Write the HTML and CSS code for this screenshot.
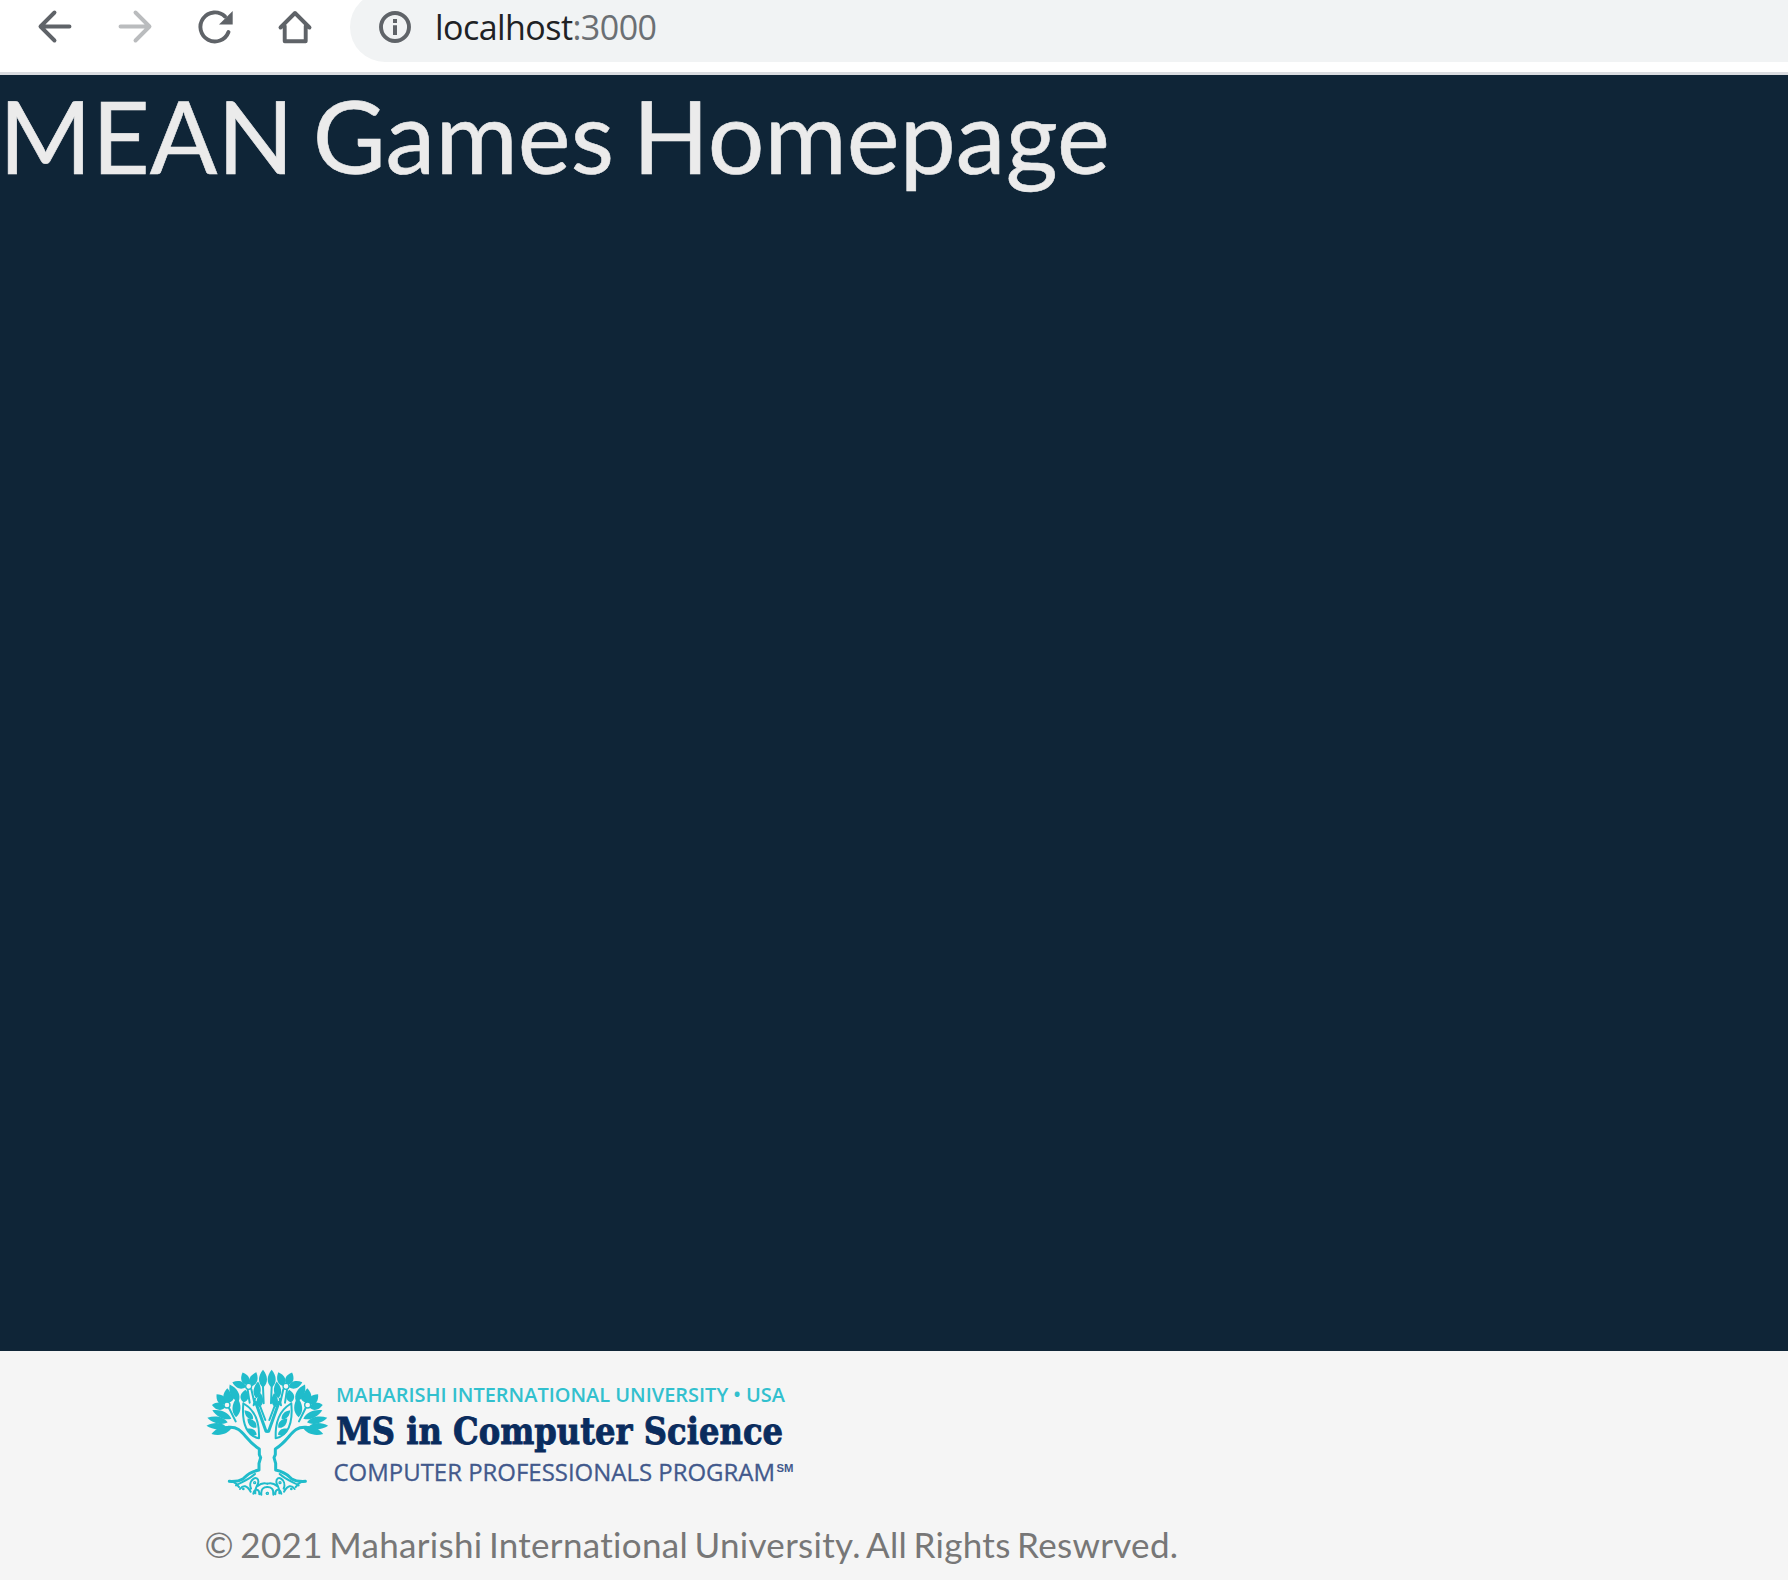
FILE: index.html
```html
<!DOCTYPE html>
<html lang="en">
<head>
<meta charset="utf-8">
<title>MEAN Games</title>
<link rel="stylesheet" href="styles.css">
</head>
<body>
<div class="toolbar">
  <nav class="nav-buttons">
    <svg class="icon" viewBox="0 0 40 40"><path d="M34.500 19.500H6M19.500 5.500L5.500 19.500l14 14"/></svg>
    <svg class="icon icon-disabled" viewBox="0 0 40 40"><path d="M5.500 19.500H34M20.500 5.500l14 14-14 14"/></svg>
    <svg class="icon" viewBox="0 0 40 40"><path d="M33.500 25A14.500 14.500 0 1 1 30 9.500"/><path class="solid" d="M37.700 4v13.500H24z"/></svg>
    <svg class="icon" viewBox="0 0 40 40"><path d="M5.500 20.500L20 6l14.500 14.500M9.700 19v15.300h21V19"/></svg>
  </nav>
  <div class="address">
    <svg class="icon" viewBox="0 0 40 40"><circle cx="20" cy="20" r="14"/><path class="solid" d="M18 12h4v4h-4zM18 18.300h4V28h-4z"/></svg>
    <span class="host">localhost</span><span class="port">:3000</span>
  </div>
</div>
<main class="page"><h1>MEAN Games Homepage</h1></main>
<footer class="footer">
  <svg class="logo" viewBox="205 1366 592 134" role="img">
    <defs>
      <path id="leaf" d="M0 0C-17-12-15-32 0-48C15-32 17-12 0 0z"/>
      <g id="half">
        <g class="leaves">
          <use href="#leaf" transform="translate(111 262) rotate(-108) scale(.95 1.350)"/>
          <use href="#leaf" transform="translate(92 259) rotate(-88) scale(.75 1.200)"/>
          <use href="#leaf" transform="translate(98 247) rotate(-77) scale(.85 1.300)"/>
          <use href="#leaf" transform="translate(109 236) rotate(-66) scale(.85 1.300)"/>
          <use href="#leaf" transform="translate(91 202) rotate(-80) scale(.9 .85)"/>
          <use href="#leaf" transform="translate(92 193) rotate(-42) scale(1 .85)"/>
          <use href="#leaf" transform="translate(97 190) rotate(0) scale(1 .95)"/>
          <use href="#leaf" transform="translate(102 187) rotate(28) scale(.6 .6)"/>
          <use href="#leaf" transform="translate(131 184) rotate(-28) scale(1 1.200)"/>
          <use href="#leaf" transform="translate(123 232) rotate(3) scale(1 1.250)"/>
          <use href="#leaf" transform="translate(153 141) rotate(-71) scale(.9 .9)"/>
          <use href="#leaf" transform="translate(158 135) rotate(-22) scale(1 .85)"/>
          <use href="#leaf" transform="translate(167 139) rotate(22) scale(1 .95)"/>
          <use href="#leaf" transform="translate(146 187) rotate(8) scale(1 .8)"/>
          <use href="#leaf" transform="translate(184 175) rotate(6) scale(.9 1.050)"/>
          <use href="#leaf" transform="translate(204 143) rotate(0) scale(1 1.120)"/>
          <use href="#leaf" transform="translate(193 202) rotate(5) scale(.8 .9)"/>
        </g>
        <g class="twigs">
          <circle cx="96" cy="195" r="9"/><circle cx="161" cy="139" r="9"/>
          <path d="M102 204l20 40M158 150l6 38M169 148l10 44M180 176l-4 20M204 140l2 50M192 190l19 50"/>
          <path d="M145 190C141 235 148 285 192 295C194 245 178 210 148 192"/>
          <path class="branch" d="M100 262C145 258 145 297 193 327V344L197 353L192 370V390C160 397 154 408 145 416C132 424 120 425 103 424M182 187L213 274h4"/>
          <path d="M103 424C121 424 125 433 132 441M123 436C145 424 160 420 180 402M135 447Q150 427 167 455M168 446C157 418 191 402 190 426C189 438 179 440 181 460M193 463C193 446 179 444 175 461M188 438Q201 426 217 431M199 464C197 446 206 441 217 441"/>
          <circle cx="179" cy="428" r="3"/><circle cx="145" cy="447" r="2"/><circle cx="217" cy="460" r="3"/>
        </g>
        <g class="leaves">
          <use href="#leaf" transform="translate(174 238) rotate(-43) scale(.7 .78)"/>
          <use href="#leaf" transform="translate(184 263) rotate(-44) scale(.8 .8)"/>
          <use href="#leaf" transform="translate(185 284) rotate(-60) scale(.7 .72)"/>
        </g>
      </g>
    </defs>
    <g transform="translate(195 1340) scale(.33333)">
      <use href="#half"/><use href="#half" transform="translate(434 0) scale(-1 1)"/>
    </g>
    <text class="logo-university" x="336" y="1402" textLength="449" lengthAdjust="spacingAndGlyphs">MAHARISHI INTERNATIONAL UNIVERSITY • USA</text>
    <text class="logo-degree" x="336" y="1444" textLength="447" lengthAdjust="spacingAndGlyphs">MS in Computer Science</text>
    <text class="logo-program" x="333.500" y="1481" textLength="441.500" lengthAdjust="spacingAndGlyphs">COMPUTER PROFESSIONALS PROGRAM</text>
    <text class="logo-mark" x="776.500" y="1471.500" textLength="17" lengthAdjust="spacingAndGlyphs">SM</text>
  </svg>
  <p>© 2021 Maharishi International University. All Rights Reswrved.</p>
</footer>
</body>
</html>
```

FILE: styles.css
```css
* { box-sizing: border-box; }
body { margin: 0; height: 1580px; display: flex; flex-direction: column; overflow: hidden; font-family: Lato, sans-serif; background: #0f2537; }
.toolbar { height: 75px; flex: none; display: flex; background: #fff; border-bottom: 3px solid #dadce0; overflow: hidden; }
.nav-buttons { display: flex; gap: 40px; padding: 7px 0 0 35px; width: 350px; flex: none; }
.icon { width: 40px; height: 40px; flex: none; fill: none; stroke: #5f6368; stroke-width: 3.9; stroke-linecap: round; stroke-linejoin: round; }
.icon-disabled { stroke: #babcbe; }
.icon .solid { fill: #5f6368; stroke: none; }
.address { flex: 1; height: 70px; margin-top: -8px; padding-left: 25px; display: flex; align-items: center; background: #f1f3f4; border-radius: 35px 0 0 35px; font: 34px "Open Sans", sans-serif; letter-spacing: -.55px; }
.host { margin-left: 20px; color: #202124; }
.port { color: #6b6f73; }
.page { flex: 1; }
h1 { margin: 0 0 0 -1px; font-size: 100px; font-weight: 400; line-height: 120px; letter-spacing: .1px; word-spacing: -7px; color: #ebebeb; -webkit-text-stroke: .6px #ebebeb; white-space: nowrap; }
.footer { height: 229px; flex: none; padding: 15px 0 0 205px; background: #f5f5f5; }
.logo { display: block; width: 592px; height: 134px; overflow: visible; }
.leaves { fill: #20bccb; }
.twigs { fill: none; stroke: #20bccb; stroke-width: 6; stroke-linecap: round; stroke-linejoin: round; }
.twigs circle { fill: #f5f5f5; stroke-width: 4; }
.twigs .branch { stroke-width: 9; }
.logo-university { font: 600 20px "Open Sans", sans-serif; fill: #32c0ce; }
.logo-degree { font: 700 37.5px "DejaVu Serif", serif; fill: #0a2c5e; stroke: #0a2c5e; stroke-width: .9px; }
.logo-program { font: 400 24.5px "Open Sans", sans-serif; fill: #42598c; stroke: #42598c; stroke-width: .3px; }
.logo-mark { font: 700 11px "Liberation Sans", sans-serif; fill: #42598c; }
.footer p { margin: 23px 0 0 -.5px; font-size: 35px; line-height: 42px; letter-spacing: .3px; word-spacing: -2.8px; font-variant-ligatures: none; color: #777; white-space: nowrap; }
```
